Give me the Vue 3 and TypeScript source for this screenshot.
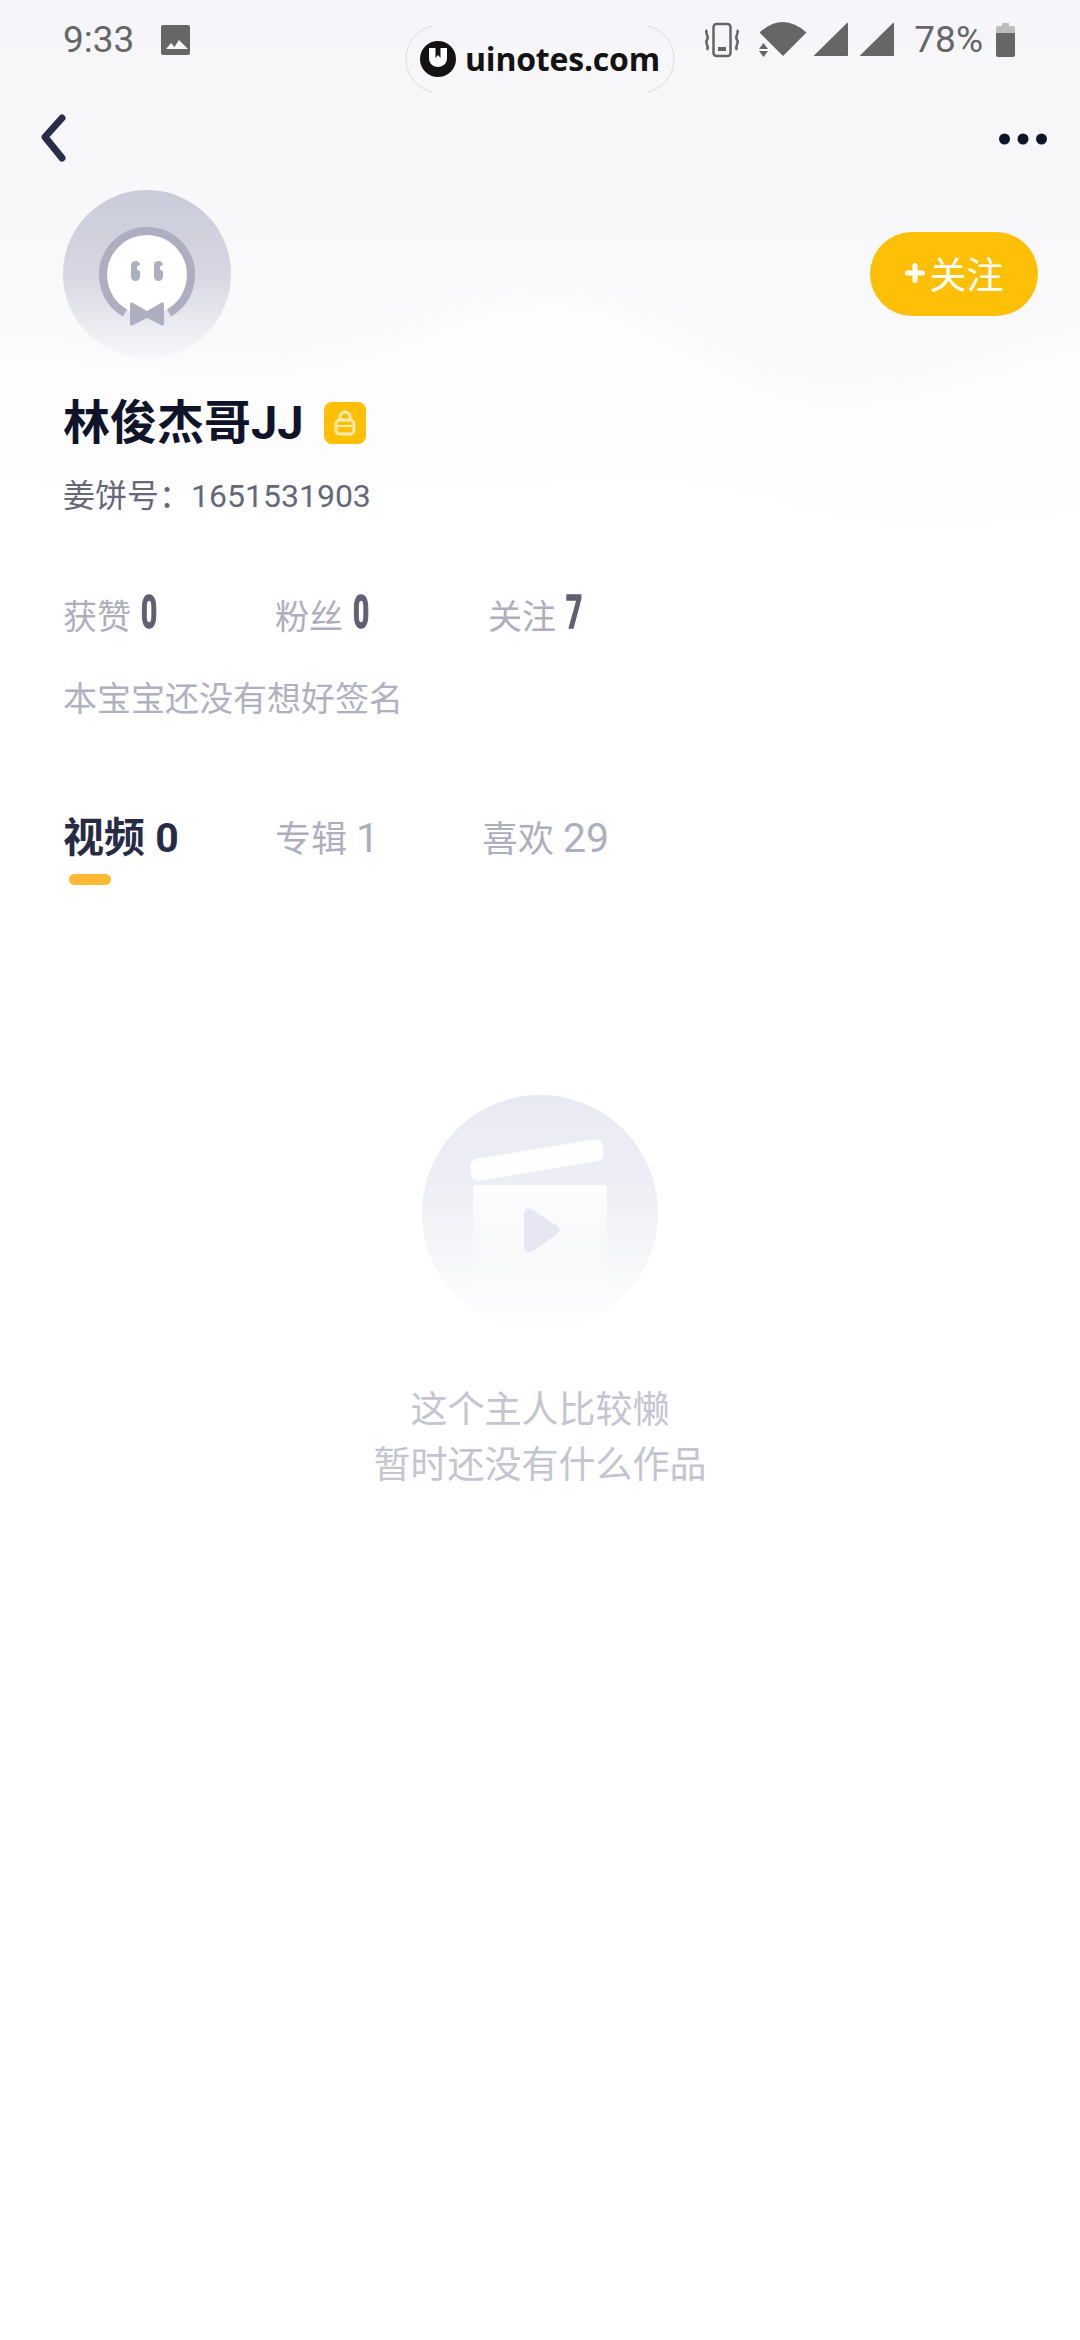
<script setup lang="ts">
type Stat = { label: string, value: number }
type Tab = { label: string, count: number, active?: boolean }

const stats: Stat[] = [
  { label: '获赞', value: 0 },
  { label: '粉丝', value: 0 },
  { label: '关注', value: 7 }
]
const tabs: Tab[] = [
  { label: '视频', count: 0, active: true },
  { label: '专辑', count: 1 },
  { label: '喜欢', count: 29 }
]
</script>

<template>
  <div class="page">
    <svg class="wash" width="1080" height="620" viewBox="0 0 1080 620">
      <defs>
        <linearGradient id="washA" x1="0" y1="0" x2="0" y2="1">
          <stop offset="0" stop-color="#f6f6f9" />
          <stop offset="0.55" stop-color="#f8f8fa" />
          <stop offset="1" stop-color="#fafafb" />
        </linearGradient>
        <filter id="soft" x="-5%" y="-5%" width="110%" height="110%">
          <feGaussianBlur stdDeviation="9" />
        </filter>
      </defs>
      <path fill="#fdfdfe" filter="url(#soft)" d="M-40 -40H1120V500C960 530 860 530 760 490C620 450 320 520 -40 470Z" />
      <path fill="url(#washA)" filter="url(#soft)" d="M-40 -40H1120V330C1010 345 950 395 840 395C720 395 660 295 550 295C440 295 400 365 240 365C140 365 60 345 -40 345Z" />
    </svg>

    <div class="mark">
      <svg class="mark-edge" width="270" height="68" viewBox="0 0 270 68">
        <path d="M27 1C12 5 1 18 1 34C1 50 12 63 27 67M243 1C258 5 269 18 269 34C269 50 258 63 243 67" fill="none" stroke="#dcdcdf" />
      </svg>
      <svg width="36" height="36" viewBox="0 0 36 36">
        <circle cx="18" cy="18" r="18" fill="#141212" />
        <path fill="#fff" d="M9 7H15.500V17L18 14L20.500 17V7H27V17C27 22.500 23 26 18 26C13 26 9 22.500 9 17Z" />
      </svg>
      <span class="mark-text">uinotes.com</span>
    </div>

    <div class="status">
      <span class="clock">9:33</span>
      <svg class="pic" width="29" height="30" viewBox="0 0 29 30">
        <rect width="29" height="30" rx="2" fill="#666" />
        <path fill="#f6f6f9" d="M5 24L10 18L13.500 22L18 15L27 24Z" />
      </svg>
      <div class="status-right">
        <svg width="190" height="36" viewBox="0 0 190 36">
          <rect x="9.500" y="2" width="17" height="32" rx="3" fill="none" stroke="#666" stroke-width="2.500" />
          <rect x="14" y="25" width="8" height="4" fill="#666" />
          <path d="M3 8C0 11 6 14 3 18C0 21 6 24 3 28M33 8C36 11 30 14 33 18C36 21 30 24 33 28" fill="none" stroke="#666" stroke-width="2.500" />
          <path fill="#666" d="M79 34L55.500 10.500Q79 -10.500 102.500 10.500Z" />
          <path fill="#666" d="M59.500 21L64 27H55ZM55 29H64L59.500 35Z" />
          <path fill="#666" d="M109.500 34L143 1Q144 0 144 2V33Q144 34 143 34ZM155.500 34L189 1Q190 0 190 2V33Q190 34 189 34Z" />
        </svg>
        <span class="pct">78%</span>
        <svg class="batt" width="19" height="34" viewBox="0 0 19 34">
          <path fill="#bdbdbd" d="M6 0H13V3H17Q19 3 19 5V10H0V5Q0 3 2 3H6Z" />
          <path fill="#666" d="M0 10H19V32Q19 34 17 34H2Q0 34 0 32Z" />
        </svg>
      </div>
    </div>

    <div class="nav">
      <svg width="30" height="50" viewBox="0 0 30 50">
        <path d="M24 4L7 23L24 44" fill="none" stroke="#2a2d4a" stroke-width="7" stroke-linecap="round" stroke-linejoin="round" />
      </svg>
      <svg width="48" height="12" viewBox="0 0 48 12">
        <circle cx="5.500" cy="6" r="5.500" fill="#0f1428" />
        <circle cx="24" cy="6" r="5.500" fill="#0f1428" />
        <circle cx="42.500" cy="6" r="5.500" fill="#0f1428" />
      </svg>
    </div>

    <div class="head">
      <svg width="168" height="168" viewBox="0 0 168 168">
        <defs>
          <linearGradient id="avatarFill" x1="0" y1="0" x2="0" y2="1">
            <stop offset="0" stop-color="#cacbd9" />
            <stop offset="0.5" stop-color="#d6d7e2" />
            <stop offset="1" stop-color="#f8f8fa" />
          </linearGradient>
        </defs>
        <circle cx="84" cy="84" r="84" fill="url(#avatarFill)" />
        <circle cx="84" cy="85" r="40" fill="#fff" />
        <path d="M62 123A44 44 0 1 1 106 123" fill="none" stroke="#adaebf" stroke-width="8" />
        <rect x="68" y="71" width="9" height="20" rx="4.500" fill="#adaebf" />
        <rect x="91" y="71" width="9" height="20" rx="4.500" fill="#adaebf" />
        <ellipse cx="77.500" cy="78" rx="3.500" ry="3" fill="#fff" />
        <ellipse cx="100.500" cy="78" rx="3.500" ry="3" fill="#fff" />
        <path fill="#adaebf" d="M67 115Q67 111 70 113L84 121L98 113Q101 111 101 115V133Q101 137 98 135L84 128L70 135Q67 137 67 133Z" />
      </svg>
      <button class="follow">
        <svg width="20" height="20" viewBox="0 0 20 20">
          <path d="M2.500 10H17.500M10 2.500V17.500" stroke="#fff" stroke-width="5" stroke-linecap="round" />
        </svg>
        <span>关注</span>
      </button>
    </div>

    <div class="name-row">
      <span class="name">林俊杰哥JJ</span>
      <span class="badge">
        <svg width="24" height="28" viewBox="0 0 24 28">
          <path d="M7 11V8a5 5 0 0 1 10 0v3" fill="none" stroke="#ffeab0" stroke-width="3" />
          <rect x="3" y="11" width="18" height="14" rx="4" fill="none" stroke="#ffeab0" stroke-width="3" />
          <path d="M3 17H21" stroke="#ffeab0" stroke-width="2" />
        </svg>
      </span>
    </div>
    <div class="uid">姜饼号：1651531903</div>

    <div class="stats">
      <div v-for="s in stats" :key="s.label" class="stat">
        <span>{{ s.label }}</span>
        <span class="num">{{ s.value }}</span>
      </div>
    </div>
    <div class="sign">本宝宝还没有想好签名</div>

    <div class="tabs">
      <div v-for="t in tabs" :key="t.label" class="tab" :class="{ on: t.active }">
        <span class="tab-text">{{ t.label }} <span class="count">{{ t.count }}</span></span>
        <i v-if="t.active" class="bar"></i>
      </div>
    </div>

    <div class="empty">
      <svg width="236" height="236" viewBox="0 0 236 236">
        <defs>
          <linearGradient id="emptyFill" x1="0" y1="0" x2="0" y2="1">
            <stop offset="0" stop-color="#e8e9f3" />
            <stop offset="0.45" stop-color="#eff0f6" />
            <stop offset="1" stop-color="#ffffff" />
          </linearGradient>
          <linearGradient id="boxFill" x1="0" y1="0" x2="0" y2="1">
            <stop offset="0" stop-color="#ffffff" stop-opacity="0.9" />
            <stop offset="1" stop-color="#ffffff" stop-opacity="0" />
          </linearGradient>
        </defs>
        <circle cx="118" cy="118" r="118" fill="url(#emptyFill)" />
        <rect x="48" y="54" width="134" height="22" rx="7" fill="#fff" fill-opacity="0.92" transform="rotate(-9.500 115 65)" />
        <rect x="51" y="90" width="134" height="118" rx="3" fill="url(#boxFill)" />
        <path fill="#e6e7f2" d="M102 120Q102 110 111 115L135 131Q140 135 135 139L111 156Q102 160 102 150Z" />
      </svg>
      <p>这个主人比较懒<br />暂时还没有什么作品</p>
    </div>
  </div>
</template>

<style scoped>
.page { position: relative; width: 1080px; min-height: 2340px; overflow: hidden; background: #fff; font-family: Roboto, "Noto Sans CJK SC", sans-serif; }
.page > * { position: relative; }
.page > .wash { position: absolute; left: 0; top: 0; }
.page > .mark { position: absolute; left: 405px; top: 25px; width: 270px; height: 68px; display: flex; align-items: center; padding-left: 15px; box-sizing: border-box; gap: 9px; }
.mark-edge { position: absolute; left: 0; top: 0; }
.mark-text { font: 700 32px "Open Sans", sans-serif; color: #141212; line-height: 36px; letter-spacing: -0.2px; }

.status { display: flex; align-items: center; height: 80px; padding: 0 65px 0 63px; color: #666; }
.clock { font-size: 37px; line-height: 44px; }
.pic { margin-left: 27px; }
.status-right { display: flex; align-items: center; margin-left: auto; }
.pct { margin-left: 20px; font-size: 37px; line-height: 44px; }
.batt { margin-left: 13px; }

.nav { display: flex; justify-content: space-between; align-items: center; height: 50px; padding: 34px 33px 26px 38px; }

.head { display: flex; justify-content: space-between; align-items: center; padding: 0 42px 0 63px; }
.head > svg { display: block; }
.follow { display: flex; align-items: center; justify-content: center; gap: 5px; width: 168px; height: 84px; padding: 0 0 2px; border: 0; border-radius: 42px; background: #fdc006; color: #fff; font: 400 37px Roboto, "Noto Sans CJK SC", sans-serif; }

.name-row { display: flex; align-items: center; height: 60px; margin-top: 35px; padding-left: 63px; }
.name { font-size: 47px; font-weight: 700; color: #0f1428; line-height: 60px; }
.badge { display: flex; align-items: center; justify-content: center; width: 42px; height: 42px; margin-left: 20px; border-radius: 8px; background: #fdc006; }

.uid { margin-top: 21px; padding-left: 63px; font-size: 32px; line-height: 44px; color: #66677b; }

.stats { display: grid; grid-template-columns: 212px 213px 1fr; margin-top: 74px; padding-left: 63px; }
.stat { display: flex; align-items: center; height: 44px; font-size: 34px; color: #aeafbe; }
.num { display: inline-block; width: 16px; margin: 0 0 4px 10px; font-size: 47px; font-weight: 700; line-height: 44px; color: #5f6074; transform: scaleX(0.6); transform-origin: left center; -webkit-text-stroke: 1.5px #5f6074; }

.sign { margin-top: 41px; padding-left: 63px; font-size: 34px; line-height: 44px; color: #b0b1c0; }

.tabs { display: grid; grid-template-columns: 212px 207px 1fr; margin-top: 89px; padding-left: 63px; }
.tab { display: flex; flex-direction: column; align-items: flex-start; height: 75px; font-size: 36px; color: #aeafbe; }
.tab-text { line-height: 56px; white-space: pre; }
.count { font-size: 41px; }
.tab.on { font-size: 41px; font-weight: 700; color: #282b45; }
.bar { width: 42px; height: 11px; margin: 8px 0 0 6px; border-radius: 6px; background: #fdb933; }

.empty { display: flex; flex-direction: column; align-items: center; margin-top: 210px; }
.empty p { margin: 52px 0 0; font-size: 37px; line-height: 55px; text-align: center; color: #c4c5d0; }
</style>

<style>
html, body { margin: 0; background: #fff; }
</style>
